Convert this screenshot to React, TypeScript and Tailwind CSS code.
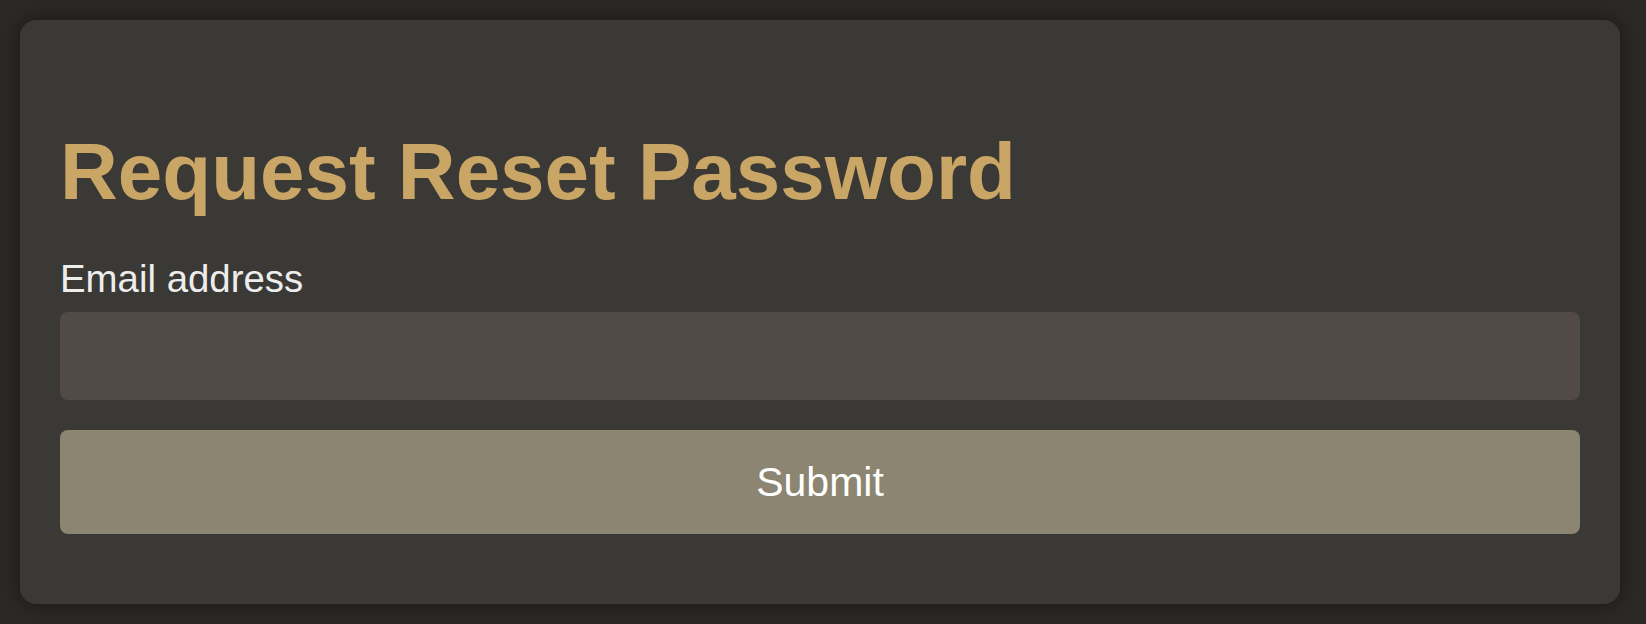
import React, { useState } from 'react';

export default function App() {
  const [email, setEmail] = useState('');

  return (
    <div className="min-h-[624px] w-full bg-[#2a2925] pt-5 pb-[19px] pl-5 pr-[26px] font-['Liberation_Sans',Arial,sans-serif]">
      <div className="rounded-2xl bg-[#3b3935] px-10 pt-[112px] pb-[70px] shadow-[0_0_18px_rgba(0,0,0,0.45)]">
        <h1 className="text-[80px] font-bold leading-[80px] text-[#c9a666]">Request Reset Password</h1>
        <form
          className="mt-[45px] flex flex-col"
          onSubmit={(e) => {
            e.preventDefault();
          }}
        >
          <label htmlFor="email" className="mb-[11px] text-[38.4px] leading-[44px] text-[#ededed]">
            Email address
          </label>
          <input
            id="email"
            type="email"
            value={email}
            onChange={(e) => setEmail(e.target.value)}
            className="h-[88px] w-full rounded-lg bg-[#524a45] px-5 text-[32px] text-white outline-none"
          />
          <button
            type="submit"
            className="mt-[30px] h-[104px] w-full rounded-lg bg-[#8b8571] text-[41px] leading-[44px] text-white"
          >
            Submit
          </button>
        </form>
      </div>
    </div>
  );
}
